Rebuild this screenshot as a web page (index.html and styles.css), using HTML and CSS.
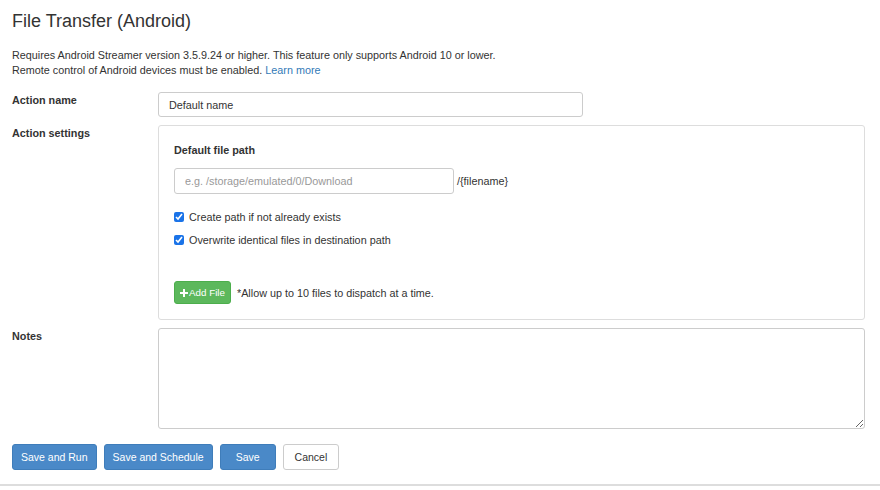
FILE: index.html
```html
<!DOCTYPE html>
<html lang="en">
<head>
    <meta charset="UTF-8">
    <meta name="viewport" content="width=device-width, initial-scale=1.0">
    <title>File Transfer (Android)</title>
    <link rel="stylesheet" href="styles.css">
</head>
<body>
    <div class="page">
        <h1 class="page-title">File Transfer (Android)</h1>

        <p class="intro">
            Requires Android Streamer version 3.5.9.24 or higher. This feature only supports Android 10 or lower.<br>
            Remote control of Android devices must be enabled. <a href="#">Learn more</a>
        </p>

        <form class="action-form">
            <div class="form-row">
                <label class="form-label" for="action-name">Action name</label>
                <div class="form-field">
                    <input type="text" id="action-name" class="text-input name-input" value="Default name">
                </div>
            </div>

            <div class="form-row">
                <div class="form-label">Action settings</div>
                <div class="form-field">
                    <div class="settings-box">
                        <div class="settings-title">Default file path</div>

                        <div class="path-line">
                            <input type="text" class="text-input path-input" placeholder="e.g. /storage/emulated/0/Download">
                            <span class="path-suffix">/{filename}</span>
                        </div>

                        <label class="check-line">
                            <input type="checkbox" checked>
                            <span>Create path if not already exists</span>
                        </label>
                        <label class="check-line">
                            <input type="checkbox" checked>
                            <span>Overwrite identical files in destination path</span>
                        </label>

                        <div class="file-line">
                            <button type="button" class="btn btn-success btn-sm">
                                <svg class="plus-icon" width="8" height="8" viewBox="0 0 8 8">
                                    <path d="M3 0h2v3h3v2H5v3H3V5H0V3h3z" fill="#fff"/>
                                </svg>Add File
                            </button>
                            <span class="file-hint">*Allow up to 10 files to dispatch at a time.</span>
                        </div>
                    </div>
                </div>
            </div>

            <div class="form-row">
                <label class="form-label" for="notes">Notes</label>
                <div class="form-field">
                    <textarea id="notes" class="text-input notes-input"></textarea>
                </div>
            </div>

            <div class="form-actions">
                <button type="button" class="btn btn-primary">Save and Run</button>
                <button type="button" class="btn btn-primary">Save and Schedule</button>
                <button type="button" class="btn btn-primary btn-save">Save</button>
                <button type="button" class="btn btn-default">Cancel</button>
            </div>
        </form>
    </div>
    <div class="page-footer"></div>
</body>
</html>
```

FILE: styles.css
```css
:root {
    --text-color: #333;
    --border-color: #ccc;
    --box-border: #ddd;
    --primary-color: #4a89c8;
    --success-color: #5cb85c;
    --link-color: #337ab7;
}

body {
    font-family: 'Liberation Sans', Arial, sans-serif;
    font-size: 10.8px;
    color: var(--text-color);
    background-color: #fff;
    margin: 0;
    padding: 0;
}

.page {
    padding: 0 12px;
}

.page-title {
    margin: 0;
    padding-top: 11px;
    font-size: 18px;
    font-weight: normal;
    line-height: 20px;
}

.intro {
    margin: 17px 0 0 0;
    line-height: 15px;
}

.intro a {
    color: var(--link-color);
    text-decoration: none;
}

.action-form {
    margin-top: 14px;
}

.form-row {
    display: flex;
    margin-bottom: 8px;
}

.form-label {
    width: 146px;
    flex-shrink: 0;
    font-weight: bold;
    padding-top: 1px;
    line-height: 14px;
}

.form-field {
    flex: 1;
    padding-right: 3px;
}

.text-input {
    font-family: inherit;
    font-size: 10.8px;
    color: var(--text-color);
    border: 1px solid var(--border-color);
    border-radius: 3px;
    box-sizing: border-box;
    outline: none;
    background: #fff;
}

.name-input {
    width: 425px;
    height: 25px;
    padding: 0 10px;
}

.settings-box {
    border: 1px solid var(--box-border);
    border-radius: 3px;
    padding: 17px 16px 15px 15px;
}

.settings-title {
    font-weight: bold;
    line-height: 14px;
}

.path-line {
    display: flex;
    align-items: center;
    margin-top: 11px;
}

.path-input {
    width: 280px;
    height: 26px;
    padding: 0 10px;
}

.path-input::placeholder {
    color: #999;
}

.path-suffix {
    margin-left: 3px;
}

.check-line {
    display: flex;
    align-items: center;
    margin-top: 8px;
    height: 15px;
}

.path-line + .check-line {
    margin-top: 15px;
}

.check-line input {
    width: 10px;
    height: 10px;
    margin: 0 5px 0 0;
    accent-color: #1a73e8;
}

.file-line {
    display: flex;
    align-items: center;
    margin-top: 34px;
}

.file-hint {
    margin-left: 6px;
}

.btn {
    font-family: inherit;
    font-size: 10.5px;
    border: 1px solid transparent;
    border-radius: 3px;
    height: 26px;
    padding: 0 8px;
    cursor: pointer;
    display: inline-flex;
    align-items: center;
}

.btn-sm {
    height: 23px;
    padding: 0 5px;
    font-size: 9.8px;
}

.btn-primary {
    background-color: var(--primary-color);
    border-color: #3f7dba;
    color: #fff;
}

.btn-save {
    padding: 0 15px;
}

.btn-success {
    background-color: var(--success-color);
    border-color: #4cae4c;
    color: #fff;
}

.btn-default {
    background-color: #fff;
    border-color: var(--border-color);
    color: var(--text-color);
    padding: 0 11px;
}

.plus-icon {
    margin-right: 1px;
}

.notes-input {
    display: block;
    width: 100%;
    height: 101px;
    resize: vertical;
    padding: 5px;
}

.form-actions {
    display: flex;
    gap: 7px;
    margin-top: 15px;
}

.page-footer {
    margin-top: 14px;
    border-top: 2px solid #ddd;
}
```
